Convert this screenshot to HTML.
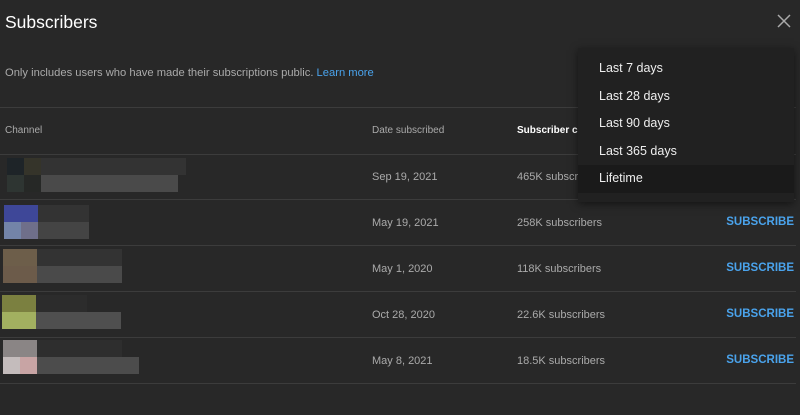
<!DOCTYPE html><html><head><style>
body{margin:0;width:800px;height:415px;background:#282828;font-family:"Liberation Sans",sans-serif;position:relative;overflow:hidden;color:#fff}
.a{position:absolute;white-space:nowrap}
.l{position:absolute;left:0;width:796px;height:1px;background:#3c3c3c}
.g{color:#aaa;font-size:11px}
.s{color:#4aa3ec;font-size:11.5px;font-weight:bold;right:6px}
.b{position:absolute;height:17px}
.m{position:absolute;left:578px;top:48px;width:216px;height:154px;background:#212121;box-shadow:0 2px 8px rgba(0,0,0,.5);padding-top:7px;box-sizing:border-box}
.m div{height:27.5px;line-height:27.5px;padding-left:21px;font-size:12.5px;color:#eee}
</style></head><body>
<div class="a" style="left:5px;top:12px;font-size:17.5px">Subscribers</div>
<svg class="a" style="left:777px;top:14px" width="14" height="14"><path d="M1 1L13 13M13 1L1 13" stroke="#aaa" stroke-width="1.5"/></svg>
<div class="a" style="left:5px;top:67px;font-size:11.2px;color:#aaa">Only includes users who have made their subscriptions public. <span style="color:#4aa3ec">Learn more</span></div>
<div class="l" style="top:107px"></div>
<div class="a" style="left:5px;top:125px;font-size:10px;color:#aaa">Channel</div>
<div class="a" style="left:372px;top:125px;font-size:10px;color:#aaa">Date subscribed</div>
<div class="a" style="left:517px;top:125px;font-size:10px;font-weight:bold">Subscriber count</div>
<div class="l" style="top:154px"></div><div class="l" style="top:199px"></div><div class="l" style="top:245px"></div><div class="l" style="top:291px"></div><div class="l" style="top:337px"></div><div class="l" style="top:383px"></div>

<div class="b" style="left:7px;top:158px;width:17px;background:#1e2428"></div><div class="b" style="left:24px;top:158px;width:17px;background:#35342a"></div><div class="b" style="left:41px;top:158px;width:145px;background:#333"></div>
<div class="b" style="left:7px;top:175px;width:17px;background:#2e3532"></div><div class="b" style="left:24px;top:175px;width:17px;background:#262826"></div><div class="b" style="left:41px;top:175px;width:137px;background:#4a4a4a"></div>
<div class="b" style="left:4px;top:205px;width:34px;background:#3e4798"></div><div class="b" style="left:38px;top:205px;width:51px;background:#333"></div>
<div class="b" style="left:4px;top:222px;width:17px;background:#7384a8"></div><div class="b" style="left:21px;top:222px;width:17px;background:#6f6f8a"></div><div class="b" style="left:38px;top:222px;width:51px;background:#444"></div>
<div class="b" style="left:3px;top:249px;width:34px;background:#6d5e4a"></div><div class="b" style="left:37px;top:249px;width:85px;background:#333"></div>
<div class="b" style="left:3px;top:266px;width:34px;background:#6c5b4a"></div><div class="b" style="left:37px;top:266px;width:85px;background:#4a4a4a"></div>
<div class="b" style="left:2px;top:295px;width:34px;background:#7b8040"></div><div class="b" style="left:36px;top:295px;width:51px;background:#2c2c2c"></div>
<div class="b" style="left:2px;top:312px;width:34px;background:#a2b060"></div><div class="b" style="left:36px;top:312px;width:85px;background:#4f4f4f"></div>
<div class="b" style="left:3px;top:340px;width:34px;background:#8a8585"></div><div class="b" style="left:37px;top:340px;width:85px;background:#2e2e2e"></div>
<div class="b" style="left:3px;top:357px;width:17px;background:#c4bcbc"></div><div class="b" style="left:20px;top:357px;width:17px;background:#c8a4a4"></div><div class="b" style="left:37px;top:357px;width:102px;background:#4c4c4c"></div>

<div class="a g" style="left:372px;top:171px">Sep 19, 2021</div><div class="a g" style="left:517px;top:171px">465K subscribers</div>
<div class="a g" style="left:372px;top:217px">May 19, 2021</div><div class="a g" style="left:517px;top:217px">258K subscribers</div><div class="a s" style="top:216px">SUBSCRIBE</div>
<div class="a g" style="left:372px;top:263px">May 1, 2020</div><div class="a g" style="left:517px;top:263px">118K subscribers</div><div class="a s" style="top:262px">SUBSCRIBE</div>
<div class="a g" style="left:372px;top:309px">Oct 28, 2020</div><div class="a g" style="left:517px;top:309px">22.6K subscribers</div><div class="a s" style="top:308px">SUBSCRIBE</div>
<div class="a g" style="left:372px;top:355px">May 8, 2021</div><div class="a g" style="left:517px;top:355px">18.5K subscribers</div><div class="a s" style="top:354px">SUBSCRIBE</div>

<div class="m"><div>Last 7 days</div><div>Last 28 days</div><div>Last 90 days</div><div>Last 365 days</div><div style="background:#1a1a1a">Lifetime</div></div>
</body></html>
